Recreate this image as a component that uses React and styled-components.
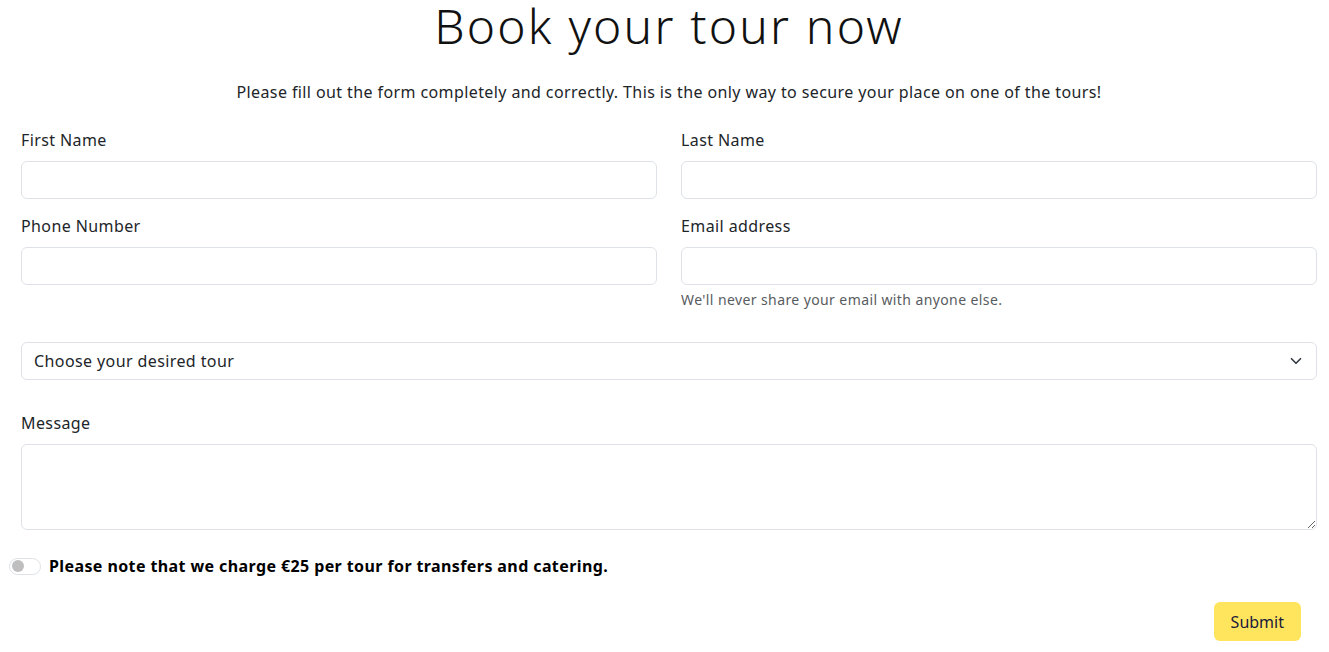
import React from "react";
import styled, { createGlobalStyle } from "styled-components";

const Global = createGlobalStyle`
  html, body { margin: 0; padding: 0; background: #fff; }
  body { font-family: "Noto Sans", "DejaVu Sans", sans-serif; color: #212529; letter-spacing: 0.4px; }
  * { box-sizing: border-box; }
`;

const Page = styled.form`
  width: 1329px;
  padding: 0 12px 0 21px;
  display: flex;
  flex-direction: column;
`;

const Title = styled.h1`
  margin: 0;
  font-size: 48px;
  line-height: 51px;
  font-weight: 300;
  letter-spacing: 2.2px;
  text-align: center;
  color: #111;
`;

const Lead = styled.p`
  margin: 29px 0 0;
  font-size: 16px;
  line-height: 24px;
  text-align: center;
  color: #212529;
`;

const Row = styled.div`
  display: grid;
  grid-template-columns: 1fr 1fr;
  column-gap: 24px;
  margin-top: ${(p) => p.$mt}px;
`;

const Field = styled.div`
  display: flex;
  flex-direction: column;
  margin-top: ${(p) => p.$mt || 0}px;
`;

const Label = styled.label`
  font-size: 16px;
  line-height: 24px;
  margin-bottom: 9px;
  color: #212529;
`;

const Input = styled.input`
  height: 38px;
  border: 1px solid #dee2e6;
  border-radius: 6px;
  padding: 6px 12px;
  font: inherit;
  outline: none;
  background: #fff;
`;

const Help = styled.div`
  margin-top: 4px;
  font-size: 14px;
  line-height: 21px;
  color: #595c5f;
`;

const SelectBox = styled.div`
  margin-top: ${(p) => p.$mt}px;
  height: 38px;
  border: 1px solid #dee2e6;
  border-radius: 6px;
  padding: 0 14px 0 12px;
  display: flex;
  align-items: center;
  justify-content: space-between;
  font-size: 16px;
  color: #212529;
`;

const TextArea = styled.textarea`
  height: 86px;
  border: 1px solid #dee2e6;
  border-radius: 6px;
  padding: 6px 12px;
  font: inherit;
  outline: none;
  resize: vertical;
`;

const SwitchRow = styled.div`
  display: flex;
  align-items: center;
  gap: 8px;
  margin: 24px 0 0 -12px;
`;

const Switch = styled.span`
  width: 32px;
  height: 17px;
  border: 1px solid #dee2e6;
  border-radius: 9px;
  display: flex;
  align-items: center;
  padding-left: 2px;
  &::before {
    content: "";
    width: 12px;
    height: 12px;
    border-radius: 50%;
    background: #bfbfbf;
  }
`;

const SwitchText = styled.span`
  font-size: 16px;
  line-height: 24px;
  font-weight: 700;
  color: #000;
`;

const Actions = styled.div`
  display: flex;
  justify-content: flex-end;
  margin-top: 24px;
  padding-right: 16px;
`;

const Button = styled.button`
  height: 39px;
  padding: 0 17px;
  border: none;
  border-radius: 6px;
  background: #ffe45e;
  color: #1a1a3a;
  font: inherit;
  font-size: 16px;
`;

export default function App() {
  return (
    <>
      <Global />
      <Page>
        <Title>Book your tour now</Title>
        <Lead>
          Please fill out the form completely and correctly. This is the only way to secure your place on one of the tours!
        </Lead>
        <Row $mt={24}>
          <Field>
            <Label>First Name</Label>
            <Input />
          </Field>
          <Field>
            <Label>Last Name</Label>
            <Input />
          </Field>
        </Row>
        <Row $mt={15}>
          <Field>
            <Label>Phone Number</Label>
            <Input />
          </Field>
          <Field>
            <Label>Email address</Label>
            <Input />
            <Help>We'll never share your email with anyone else.</Help>
          </Field>
        </Row>
        <SelectBox $mt={32}>
          <span>Choose your desired tour</span>
          <svg width="12" height="12" viewBox="0 0 16 16" fill="none">
            <path d="M2 5l6 6 6-6" stroke="#343a40" strokeWidth="2.2" strokeLinecap="round" strokeLinejoin="round" />
          </svg>
        </SelectBox>
        <Field $mt={31}>
          <Label>Message</Label>
          <TextArea />
        </Field>
        <SwitchRow>
          <Switch />
          <SwitchText>Please note that we charge €25 per tour for transfers and catering.</SwitchText>
        </SwitchRow>
        <Actions>
          <Button type="button">Submit</Button>
        </Actions>
      </Page>
    </>
  );
}
